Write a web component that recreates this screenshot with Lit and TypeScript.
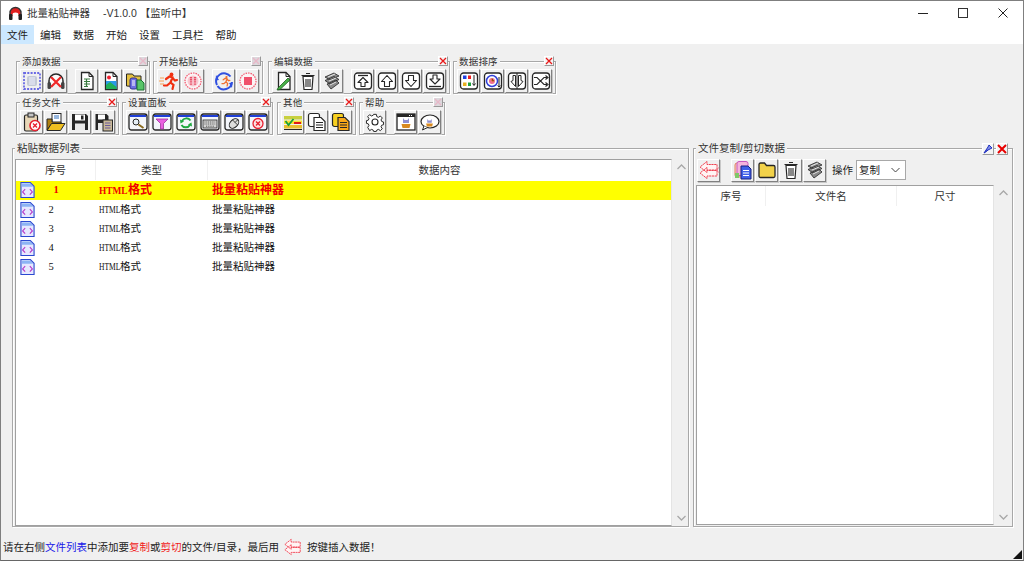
import { LitElement, html, css, svg } from 'lit';
import { customElement } from 'lit/decorators.js';

const INK = '#262626';

const doc = (fill = '#fff', stroke = INK) =>
  svg`<path d="M4.500 1.500h7.500l4 4v13H4.500z" fill=${fill} stroke=${stroke} stroke-width="1.300"/><path d="M12 1.500v4h4" fill="none" stroke=${stroke}/>`;

const boxArrow = (arrow: string, bar = '') =>
  svg`<rect x="1.500" y="2" width="17" height="16" rx="3" fill="#fff" stroke=${INK} stroke-width="1.300"/>
  <path d=${arrow} fill="#fff" stroke=${INK} stroke-width="1.100" stroke-linejoin="round"/>${bar ? svg`<path d=${bar} stroke=${INK} stroke-width="1.300"/>` : ''}`;

const win = (inner: unknown) =>
  svg`<rect x="1" y="2" width="18" height="16" rx="2.500" fill="#f4f6fb" stroke=${INK} stroke-width="1.300"/>
  <path d="M2 3h16v2H2z" fill="#2040d8"/>${inner}`;

const dashed = (inner: unknown) =>
  svg`<circle cx="10" cy="10" r="8" fill="#fbf4f5" stroke="#f45068" stroke-width="1.200" stroke-dasharray="1.500 1"/>${inner}`;

const runner = (color: string) =>
  svg`<circle cx="12.500" cy="3.500" r="1.900" fill=${color}/>
  <path d="M7 8l3.500-2.500 3 1-2 5 3 2.500-1 4M11 12l-3 2.500H5M13.500 7l2.500 2.500 2-.5" fill="none" stroke=${color} stroke-width="2.200" stroke-linecap="round"/>`;

const bin = svg`<path d="M5 5.500l1 13h8l1-13z" fill="#fff" stroke=${INK} stroke-width="1.200"/>
  <path d="M3.500 4.500h13M8 2.500h4M8 8v8M10 8v8M12 8v8" stroke=${INK} stroke-width="1.100"/>`;

const eraser = svg`<path d="M3 6l9-4 5 3-9 4zM3 9.500l9-4 5 3-9 4.500zM5 13l9-4 3 3-8 6z" fill="#8a8a8a" stroke=${INK} stroke-width=".8"/>
  <path d="M6 6l7-3M7 10l7-3M8 14l6-3" stroke="#e4e4e4"/>`;

const folder = svg`<path d="M2 6V4.500a1.500 1.500 0 0 1 1.500-1.500h4L9.500 5.500h7A1.500 1.500 0 0 1 18 7v9a1.500 1.500 0 0 1-1.500 1.500h-13A1.500 1.500 0 0 1 2 16z" fill="#f2d24a" stroke=${INK} stroke-width="1.300"/>`;

const cat = svg`<path d="M7 6l1.500 2h3L13 6v5H7z" fill="#8f8fd0"/><path d="M5.500 12h9l-1 4h-7z" fill="#d88a20"/>`;

const arrows = svg`<path d="M8 1.500L1 7l7 5.500V10h10V4.500H8zM8 7.500L1 13l7 5.500V16h10v-5.500H8z" fill="#fff4f4" stroke="#f04050" stroke-width="1" stroke-dasharray="2.200 .6"/>`;

const ICONS: Record<string, unknown> = {
  select: svg`<rect x="2" y="2" width="16" height="16" fill="none" stroke="#6a6ae4" stroke-width="1.800" stroke-dasharray="2 1.300"/>
    <rect x="5" y="5" width="10" height="10" rx="2" fill="#c4cad6"/><path d="M8 6v8M10 6v8M12 6v8" stroke="#eef"/>`,
  muted: svg`<path d="M3 13v-3a7 7 0 0 1 14 0v3" fill="#fbfbfb" stroke=${INK} stroke-width="1.500"/>
    <rect x="1.500" y="11" width="3.500" height="7" rx="1.500" fill="#444"/><rect x="15" y="11" width="3.500" height="7" rx="1.500" fill="#444"/>
    <path d="M5 6l10 10M15 6L5 16" stroke="#f02828" stroke-width="2.200"/>`,
  docText: svg`${doc()}<path d="M7 8h6M7 10.500h6M9.500 8v8M7 13h6M7 15.500h4" stroke="#3a7a40" stroke-width="1.200"/>`,
  docImage: svg`${doc()}<path d="M5 10h10.500v8H5z" fill="#2a9ae8"/><path d="M5 18v-4l4-3 6.500 5v2z" fill="#20b058"/><circle cx="8" cy="6.500" r="2" fill="#f02030"/>`,
  docsFolder: svg`<path d="M1.500 15V3h6l1.500 2h7v11z" fill="#e4c040" stroke=${INK}/><rect x="5" y="7" width="7" height="11" rx="2" fill="#7070e4" stroke="#303090"/>
    <path d="M12 9h4l3 3v7h-7z" fill="#58c468" stroke="#187030"/><path d="M7 10h3M7 12h3M7 14h3" stroke="#fff"/>`,
  run: svg`<path d="M1 7h4M0 10h5M1 13h4" stroke="#f8a050" stroke-width="1.200"/>${runner('#f03010')}`,
  pause: dashed(svg`<circle cx="10" cy="10" r="5.500" fill="#f8c8d0"/><path d="M8 6v8M12 6v8" stroke="#e85068" stroke-width="2.200" stroke-dasharray="1.200 .6"/>`),
  rerun: svg`<path d="M16.500 5.500A8 8 0 0 0 3 14M3.500 15A8 8 0 0 0 18 11" fill="none" stroke="#3050e0" stroke-width="2"/>
    <path d="M2 4l3 5-3.500.5zM18 17l-3-5 3.500-.5z" fill="#3050e0"/><g transform="translate(5 4) scale(.6)">${runner('#f07030')}</g>`,
  halt: dashed(svg`<rect x="6" y="6" width="8" height="8" fill="#f0506a"/>`),
  docPen: svg`${doc()}<path d="M4 17l10-10 2 2-10 9.500-3 .5z" fill="#48b048" stroke="#206020" stroke-width=".8"/>`,
  trash: bin,
  eraser,
  top: boxArrow('M10 6.500l5 5h-3v4H8v-4H5z', 'M5 4.500h10'),
  up: boxArrow('M10 4.500l5.500 6h-3v5h-5v-5h-3z'),
  down: boxArrow('M10 15.500l5.500-6h-3v-5h-5v5h-3z'),
  bottom: boxArrow('M10 13l5-5h-3V4H8v4H5z', 'M4 15.500h12'),
  sortColor: svg`<rect x="1.500" y="2" width="17" height="16" rx="3" fill="#fff" stroke=${INK} stroke-width="1.300"/>
    <rect x="4" y="4.500" width="3.500" height="3.500" fill="#2040e0"/><rect x="9" y="4.500" width="3" height="3.500" fill="#f02020"/>
    <rect x="4" y="11.500" width="3.500" height="3.500" fill="#e8b020"/><rect x="9" y="11.500" width="3" height="3.500" fill="#20a040"/>
    <path d="M15 4v10M13.500 12.500l1.500 2 1.500-2" stroke=${INK} fill="none"/>`,
  sortTime: svg`<rect x="1.500" y="2" width="17" height="16" rx="3" fill="#fff" stroke=${INK} stroke-width="1.300"/>
    <circle cx="9" cy="10" r="5.500" fill="#fff" stroke="#3040d8" stroke-width="1.500"/><circle cx="9" cy="10" r="3" fill="#f07090"/>
    <path d="M9 7.500V10h2" stroke="#d07010"/><path d="M16 6v10M14.700 14.500l1.300 1.700 1.300-1.700" stroke=${INK} fill="none"/>`,
  split: svg`<rect x="1.500" y="2" width="17" height="16" rx="3" fill="#fff" stroke=${INK} stroke-width="1.300"/>
    <path d="M10 2v16" stroke=${INK}/><path d="M8.500 4.500v11L4 10.500l2-1v-5zM11.500 4.500h2.500v5l2 1-4.500 5z" fill="#fff" stroke=${INK}/>`,
  shuffle: svg`<rect x="1.500" y="2" width="17" height="16" rx="3" fill="#fff" stroke=${INK} stroke-width="1.300"/>
    <path d="M3 6.500h3l7 7h3M3 13.500h3l7-7h3M14.500 4.500l2.500 2-2.500 2M14.500 11.500l2.500 2-2.500 2" fill="none" stroke=${INK} stroke-width="1.100"/>`,
  clipRemove: svg`<rect x="2.500" y="3" width="13" height="16" rx="1.500" fill="#e8d8b8" stroke=${INK} stroke-width="1.200"/><rect x="6" y="1" width="6" height="4" fill="#c4c4c4" stroke=${INK}/>
    <circle cx="13" cy="13.500" r="5" fill="#fff" stroke="#e82030" stroke-width="1.600"/><path d="M11 11.500l4 4M15 11.500l-4 4" stroke="#e82030" stroke-width="1.400"/>`,
  open: svg`<rect x="6" y="1.500" width="9" height="9" fill="#fff" stroke=${INK}/><path d="M8 4h5M8 6h5" stroke="#3070c0"/>
    <path d="M1 18V7h5v3h9v2H5.500z" fill="#b08010" stroke=${INK}/><path d="M1 18.500l4.500-7H19l-4.500 7z" fill="#f0c020" stroke=${INK}/>`,
  save: svg`<path d="M2 2h14l2 2v14H2z" fill=${INK}/><rect x="5" y="2.500" width="10" height="6" fill="#fff"/><rect x="5" y="11.500" width="10" height="6.500" fill="#e8e8e8"/><rect x="11" y="3.500" width="2.500" height="4" fill=${INK}/>`,
  saveAs: svg`<path d="M1.500 2h11l2 2v14h-13z" fill=${INK}/><rect x="4" y="2.500" width="7" height="5" fill="#fff"/><rect x="4" y="11" width="5" height="7" fill="#e8e8e8"/>
    <rect x="9" y="8" width="9.500" height="11" fill="#c8b898" stroke=${INK}/><path d="M11 11h5.500M11 13.500h5.500M11 16h5.500" stroke="#6a5a9a"/>`,
  search: win(svg`<circle cx="8" cy="10" r="3" fill="#e4edf6" stroke=${INK}/><path d="M10.500 12.500l5 3.500" stroke="#8a6a20" stroke-width="2"/>`),
  filter: win(svg`<path d="M4 7h12l-4.500 4.500V17h-3v-5.500z" fill="#e860e0" stroke="#a030a0" stroke-width=".8"/>`),
  recycle: win(svg`<path d="M14.500 8.500A5 5 0 0 0 6 9M5.500 13A5 5 0 0 0 14 13" fill="none" stroke="#20a840" stroke-width="2"/>
    <path d="M4 7.500l4 2-3.500 2zM16 14.500l-4-2 3.500-2z" fill="#20a840"/>`),
  keys: win(svg`<rect x="3" y="8" width="14" height="8" fill="#d4d4d4" stroke=${INK} stroke-width=".8"/><path d="M4.500 10h11M4.500 12h11M6 14.200h8" stroke="#555" stroke-dasharray="1 .8"/>`),
  mouse: win(svg`<g transform="rotate(45 10 11.500)"><ellipse cx="10" cy="11.500" rx="3.800" ry="5.500" fill="#ddd" stroke=${INK}/><path d="M6.500 10h7M10 6v4" stroke=${INK} stroke-width=".8"/></g>`),
  cancel: win(svg`<circle cx="10" cy="11.500" r="5" fill="#fde4e4" stroke="#e82030" stroke-width="1.300"/><path d="M8 9.500l4 4M12 9.500l-4 4" stroke="#e82030" stroke-width="1.400"/>`),
  check: svg`<rect x="1" y="4" width="18" height="3.500" fill="#c8d040"/><rect x="1" y="8.500" width="18" height="3.500" fill="#f8e030"/><rect x="1" y="13" width="18" height="3.500" fill="#e8c030"/>
    <path d="M2.500 9l3 4 5-6" fill="none" stroke="#18a038" stroke-width="1.800"/><path d="M11 11h7" stroke="#e01818" stroke-width="2"/><path d="M1 17.500h18" stroke=${INK}/>`,
  copy: svg`<rect x="1.500" y="1.500" width="11" height="13" rx="2" fill="#fff" stroke=${INK} stroke-width="1.200"/>
    <path d="M7 5.500h7l4 4v9H7z" fill="#fff" stroke=${INK} stroke-width="1.200"/><path d="M9 10.500h7M9 13h7M9 15.500h7" stroke=${INK} stroke-width="1.100"/>`,
  paste: svg`<rect x="1.500" y="1.500" width="11" height="13" rx="2" fill="#f8d020" stroke=${INK} stroke-width="1.200"/>
    <path d="M7 5.500h7l4 4v9H7z" fill="#f8a818" stroke=${INK} stroke-width="1.200"/><path d="M9 10.500h7M9 13h7M9 15.500h7" stroke=${INK} stroke-width="1.100"/>`,
  gear: svg`<path d="M8.500 1.500h3l.5 2.500 1.800.8 2.200-1.400 2.100 2.100-1.400 2.200.8 1.800 2 .5v3l-2 .5-.8 1.800 1.400 2.200-2.100 2.100-2.200-1.400-1.800.8-.5 1.500h-3l-.5-1.500-1.800-.8-2.200 1.400L1.900 16l1.400-2.200-.8-1.800-2-.5v-3l2-.5.8-1.800-1.400-2.200L4 1.900l2.200 1.400L8 2.500z" transform="translate(1 1) scale(.9)" fill="#fff" stroke=${INK} stroke-width="1.100"/>
    <circle cx="10" cy="10" r="3" fill="#fff" stroke=${INK} stroke-width="1.100"/>`,
  about: svg`<rect x="1" y="2" width="18" height="16" fill="#fff" stroke=${INK} stroke-width="1.300"/><path d="M1 2h18v3H1z" fill=${INK}/><path d="M13 3.500h1M15 3.500h1" stroke="#fff"/>${cat}`,
  bubble: svg`<ellipse cx="10" cy="9.500" rx="9" ry="6.500" fill="#fff" stroke=${INK} stroke-width="1.200"/><path d="M4 14l-1.500 4 5-2.500" fill="#fff" stroke=${INK}/><g transform="translate(2 2.500) scale(.75)">${cat}</g>`,
  insert: arrows,
  insertTool: svg`${arrows}<path d="M19.500 7.500l-1.500 2.500 1.500 2.500" fill="none" stroke="#f07080"/>`,
  multi: svg`<rect x="2" y="3" width="11" height="14" rx="2" fill="#f8d0c0" stroke="#e08060"/><rect x="4" y="1.500" width="11" height="14" rx="2" fill="#f4b4dc" stroke="#c858c0"/>
    <path d="M8 6h7l3 3v10H8z" fill="#4060e8" stroke="#182080"/><path d="M10 10.500h6M10 13h6M10 15.500h6" stroke="#fff"/><path d="M2 13h4v5H2z" fill="#80c868"/>`,
  folder,
};

const icon = (name: string, size = 20) =>
  html`<svg width=${size} height=${size} viewBox="0 0 20 20">${ICONS[name]}</svg>`;

type Group = { label: string; faded?: boolean; first: string[]; rest: string[] };

const ROW_ONE: Group[] = [
  { label: '添加数据', faded: true, first: ['select', 'muted'], rest: ['docText', 'docImage', 'docsFolder'] },
  { label: '开始粘贴', faded: true, first: ['run', 'pause'], rest: ['rerun', 'halt'] },
  { label: '编辑数据', first: ['docPen', 'trash', 'eraser'], rest: ['top', 'up', 'down', 'bottom'] },
  { label: '数据排序', first: ['sortColor', 'sortTime', 'split', 'shuffle'], rest: [] },
];

const ROW_TWO: Group[] = [
  { label: '任务文件', first: ['clipRemove', 'open', 'save', 'saveAs'], rest: [] },
  { label: '设置面板', first: ['search', 'filter', 'recycle', 'keys', 'mouse', 'cancel'], rest: [] },
  { label: '其他', first: ['check', 'copy', 'paste'], rest: [] },
  { label: '帮助', faded: true, first: ['gear'], rest: ['about', 'bubble'] },
];

const ROWS = [1, 2, 3, 4, 5];

const chevron = (d: string) =>
  html`<svg width="9" height="6" viewBox="0 0 9 6"><path d=${d} fill="none" stroke="#a8a8a8" stroke-width="1.300"/></svg>`;

@customElement('app-root')
export class AppRoot extends LitElement {
  static styles = css`
    :host {
      display: flex;
      flex-direction: column;
      box-sizing: border-box;
      width: 1024px;
      height: 561px;
      overflow: hidden;
      position: relative;
      background: #f0f0f0;
      border: 1px solid #7f7f7f;
      border-bottom-color: #666;
      color: #222;
      font: 10.5px/12px "Liberation Sans", "Noto Sans CJK SC", sans-serif;
    }

    .title {
      display: flex;
      align-items: center;
      flex: none;
      height: 24px;
      padding-left: 7px;
      background: #fff;
      color: #333;
    }
    .title svg { margin-right: 4px; }
    .version { margin-left: 13px; }
    .controls { display: flex; margin-left: auto; }
    .controls span { display: grid; place-items: center; width: 40px; height: 24px; }
    .controls svg { margin: 0; }

    .menu {
      display: flex;
      flex: none;
      height: 19px;
      background: #fff;
    }
    .menu span { display: flex; align-items: center; padding: 0 6px; }
    .menu .active { background: #cce8ff; }

    .toolbar {
      display: flex;
      flex-direction: column;
      flex: none;
      gap: 8px;
      padding: 17px 0 0 15px;
    }
    .tool-row { display: flex; gap: 3px; }
    .tool-row.first > :nth-child(2) { margin-right: 2px; }
    .tool-row.second > :nth-child(2) { margin-right: 1px; }

    .group {
      position: relative;
      box-sizing: border-box;
      padding: 0 3px 0;
      border: 1px solid #a8a8a8;
      box-shadow: inset 1px 1px 0 #fff, 1px 1px 0 #fff;
    }
    .legend {
      display: block;
      width: fit-content;
      height: 11px;
      margin: -6px 0 2px 0;
      padding: 0 2px;
      background: #f0f0f0;
      line-height: 11px;
      color: #333;
    }
    .group .legend { font-size: 9.500px; letter-spacing: .2px; }
    .group .pin {
      position: absolute;
      top: -6px;
      right: 1px;
    }
    .pin {
      display: grid;
      place-items: center;
      box-sizing: border-box;
      width: 10px;
      height: 10px;
      background: #f4f4f4;
      border: 1px solid;
      border-color: #fff #999 #999 #fff;
    }
    .pin.faded { background: #dcd8dc; }

    .buttons { display: flex; gap: 1px; }
    .spacer { width: 6px; flex: none; }
    .tool {
      display: grid;
      place-items: center;
      box-sizing: border-box;
      width: 23px;
      height: 24px;
      flex: none;
      background: #f0f0f0;
      border: 1px solid;
      border-color: #fff #808080 #808080 #fff;
      box-shadow: 1px 1px 0 #c8c8c8;
    }

    .main {
      display: flex;
      flex: none;
      gap: 4px;
      margin: 13px 0 0 11px;
    }
    .panel {
      position: relative;
      box-sizing: border-box;
      height: 379px;
      border: 1px solid #a8a8a8;
      box-shadow: inset 1px 1px 0 #fff, 1px 1px 0 #fff;
    }
    .panel.left { width: 677px; }
    .panel.right { width: 320px; }
    .panel .legend { margin-bottom: 5px; margin-left: 2px; }
    .panel-body { display: flex; height: 367px; padding-left: 2px; }
    .panel.right .panel-body { flex-direction: column; height: auto; }

    .list {
      box-sizing: border-box;
      flex: none;
      background: #fff;
      border: 1px solid;
      border-color: #a0a0a0 #e4e4e4 #a0a0a0 #a0a0a0;
    }
    .left .list { width: 657px; height: 367px; }
    .right .list { width: 298px; height: 340px; }

    .head, .row { display: grid; align-items: center; box-sizing: border-box; }
    .left .head, .left .row { grid-template-columns: 80px 112px 1fr; }
    .right .head { grid-template-columns: 69px 131px 1fr; }
    .head { height: 21px; padding-bottom: 1px; text-align: center; color: #333; }
    .head span { display: flex; align-items: center; justify-content: center; height: 100%; border-right: 1px solid #f0f0f0; }
    .head span:last-child { border: 0; }

    .row { height: 19px; font-family: "Liberation Serif", "Noto Sans CJK SC", serif; color: #111; }
    .row .cell-no { display: flex; align-items: center; gap: 11px; padding-left: 4px; }
    .row .num { width: 10px; text-align: center; }
    .row .cell { padding-left: 3px; white-space: nowrap; }
    .row .cell + .cell { padding-left: 4px; }
    .row .mono {
      display: inline-block;
      width: 21px;
      font-size: 10.500px;
      transform: scaleX(.72);
      transform-origin: 0 50%;
    }
    .row.on { padding-bottom: 1px; background: #ffff00; color: #f00000; font-weight: 700; font-size: 12px; }
    .row.on .mono { width: 29px; font-size: 11px; transform: scaleX(.85); }
    .row.on .num { margin-left: 5px; font-size: 10.500px; }

    .scroll {
      display: flex;
      flex-direction: column;
      align-items: center;
      justify-content: space-between;
      box-sizing: border-box;
      width: 16px;
      padding: 5px 0;
    }
    .left .scroll { height: 367px; }
    .right .scroll { height: 340px; }
    .list-wrap { display: flex; gap: 1px; }

    .file-tools { display: flex; align-items: center; height: 22px; margin-bottom: 4px; padding-left: 1px; gap: 1px; }
    .file-tools .tool { height: 23px; }
    .file-tools .gap { width: 9px; }
    .file-tools .op { margin: 0 2px 0 5px; }
    .pick {
      display: flex;
      align-items: center;
      justify-content: space-between;
      box-sizing: border-box;
      width: 50px;
      height: 20px;
      padding: 0 5px 0 2px;
      background: #fff;
      border: 1px solid #a8a8a8;
    }

    .panel-pins { position: absolute; top: -6px; right: 4px; display: flex; gap: 2px; }
    .panel-pins .pin { width: 12px; height: 12px; }

    .status {
      display: flex;
      align-items: center;
      flex: none;
      margin-top: 13px;
      padding-left: 2px;
      height: 14px;
      white-space: nowrap;
    }
    .status .blue { color: #1818e8; }
    .status .red { color: #f01818; }
    .status svg { margin: 0 5px; }

    .grip {
      position: absolute;
      right: 1px;
      bottom: 1px;
      width: 9px;
      height: 9px;
      background: #111;
      clip-path: polygon(100% 0, 100% 100%, 0 100%);
    }
  `;

  private renderGroup(g: Group) {
    const mark = g.faded ? '#e8b8c8' : '#e81818';
    return html`
      <div class="group">
        <span class="legend">${g.label}</span>
        <span class="pin ${g.faded ? 'faded' : ''}">
          <svg width="8" height="8" viewBox="0 0 8 8"><path d="M1 1l6 6M7 1L1 7" stroke=${mark} stroke-width="1.300"/></svg>
        </span>
        <div class="buttons">
          ${g.first.map((n) => html`<span class="tool">${icon(n)}</span>`)}
          ${g.rest.length ? html`<span class="spacer"></span>` : ''}
          ${g.rest.map((n) => html`<span class="tool">${icon(n)}</span>`)}
        </div>
      </div>
    `;
  }

  protected render() {
    return html`
      <div class="title">
        <svg width="15" height="15" viewBox="0 0 15 15">
          <path d="M2 10V7a5.500 5.500 0 0 1 11 0v3" fill="#e02020" stroke="#333" stroke-width="1.400"/>
          <path d="M4.500 11V8.500a3 2 0 0 1 6 0V11z" fill="#fff"/>
          <rect x="1" y="8" width="3.500" height="6" rx="1" fill="#222"/><rect x="10.500" y="8" width="3.500" height="6" rx="1" fill="#222"/>
        </svg>
        <span>批量粘贴神器</span>
        <span class="version">-V1.0.0 【监听中】</span>
        <div class="controls">
          <span><svg width="10" height="10" viewBox="0 0 10 10"><path d="M0 5.500h10" stroke="#222"/></svg></span>
          <span><svg width="10" height="10" viewBox="0 0 10 10"><rect x=".5" y=".5" width="9" height="9" fill="none" stroke="#333"/></svg></span>
          <span><svg width="10" height="10" viewBox="0 0 10 10"><path d="M.5.500l9 9M9.500.500l-9 9" stroke="#222"/></svg></span>
        </div>
      </div>

      <div class="menu">
        <span class="active">文件</span>
        <span>编辑</span><span>数据</span><span>开始</span><span>设置</span><span>工具栏</span><span>帮助</span>
      </div>

      <div class="toolbar">
        <div class="tool-row first">${ROW_ONE.map((g) => this.renderGroup(g))}</div>
        <div class="tool-row second">${ROW_TWO.map((g) => this.renderGroup(g))}</div>
      </div>

      <div class="main">
        <section class="panel left">
          <span class="legend">粘贴数据列表</span>
          <div class="panel-body">
            <div class="list-wrap">
              <div class="list">
                <div class="head"><span>序号</span><span>类型</span><span>数据内容</span></div>
                ${ROWS.map((n) => html`
                  <div class="row ${n === 1 ? 'on' : ''}">
                    <div class="cell-no">
                      <svg width="15" height="18" viewBox="0 0 16 18">
                        <path d="M1 1h10l4 4v12H1z" fill="#e6e8ff" stroke="#2a48d0" stroke-width="1.200"/>
                        <path d="M2 2h9l3 3.500H2z" fill="#8cb4f4"/>
                        <path d="M5.500 8L2.800 11l2.700 3M10.500 8l2.700 3-2.700 3" fill="none" stroke="#b838c8" stroke-width="1.200"/>
                      </svg>
                      <span class="num">${n}</span>
                    </div>
                    <span class="cell"><span class="mono">HTML</span>格式</span>
                    <span class="cell">批量粘贴神器</span>
                  </div>
                `)}
              </div>
              <div class="scroll">${chevron('M.5 5l4-4 4 4')}${chevron('M.5 1l4 4 4-4')}</div>
            </div>
          </div>
        </section>

        <section class="panel right">
          <span class="legend">文件复制/剪切数据</span>
          <div class="panel-pins">
            <span class="pin"><svg width="10" height="10" viewBox="0 0 10 10"><path d="M1 9l4-6 1-2 3 3-2 1-2 1zM1 9l4-3" fill="#8090e8" stroke="#2030c0"/></svg></span>
            <span class="pin"><svg width="10" height="10" viewBox="0 0 10 10"><path d="M1 1l8 8M9 1L1 9" stroke="#e80000" stroke-width="2"/></svg></span>
          </div>
          <div class="panel-body">
            <div class="file-tools">
              <span class="tool">${icon('insertTool')}</span>
              <span class="gap"></span>
              <span class="tool">${icon('multi')}</span>
              <span class="tool">${icon('folder')}</span>
              <span class="tool">${icon('trash')}</span>
              <span class="tool">${icon('eraser')}</span>
              <span class="op">操作</span>
              <div class="pick">
                <span>复制</span>
                <svg width="9" height="6" viewBox="0 0 9 6"><path d="M.5 1l4 4 4-4" fill="none" stroke="#444"/></svg>
              </div>
            </div>
            <div class="list-wrap">
              <div class="list">
                <div class="head"><span>序号</span><span>文件名</span><span>尺寸</span></div>
              </div>
              <div class="scroll">${chevron('M.5 5l4-4 4 4')}${chevron('M.5 1l4 4 4-4')}</div>
            </div>
          </div>
        </section>
      </div>

      <div class="status">
        请在右侧<span class="blue">文件列表</span>中添加要<span class="red">复制</span>或<span class="red">剪切</span>的文件/目录，最后用
        ${icon('insert', 18)}
        按键插入数据！
      </div>
      <span class="grip"></span>
    `;
  }
}

declare global {
  interface HTMLElementTagNameMap {
    'app-root': AppRoot;
  }
}
